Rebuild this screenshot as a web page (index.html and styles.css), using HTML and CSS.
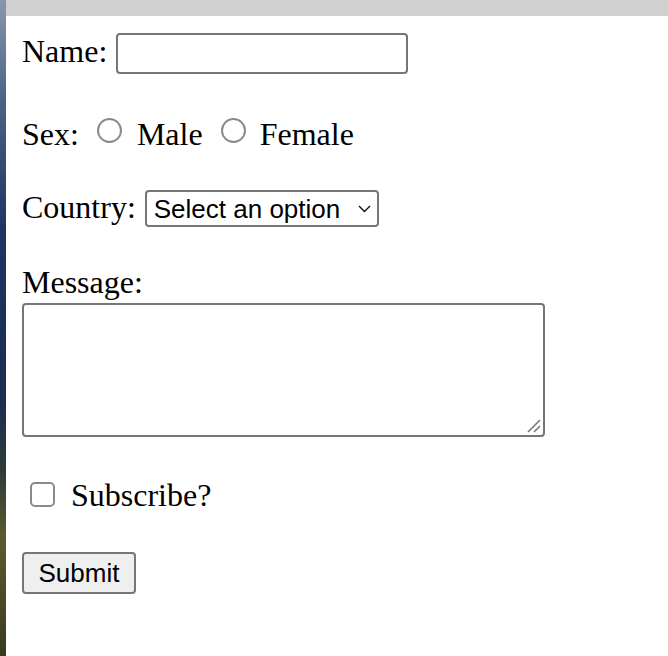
FILE: index.html
```html
<!DOCTYPE html>
<html lang="en">
<head>
    <meta charset="UTF-8">
    <meta name="viewport" content="width=device-width, initial-scale=1.0">
    <title>Form</title>
    <link rel="stylesheet" href="styles.css">
</head>
<body>
    <div class="desktop"></div>
    <div class="window">
        <div class="titlebar"></div>
        <form class="page">
            <div class="row row-name">
                <label for="name">Name:</label>
                <input type="text" id="name" class="text-input">
            </div>

            <div class="row row-sex">
                <span>Sex:</span>
                <input type="radio" id="male" name="sex" class="radio radio-first">
                <label for="male" class="radio-label">Male</label>
                <input type="radio" id="female" name="sex" class="radio">
                <label for="female" class="radio-label radio-label-last">Female</label>
            </div>

            <div class="row row-country">
                <label for="country">Country:</label>
                <div class="select-box">
                    <select id="country">
                        <option value="">Select an option</option>
                        <option value="de">Germany</option>
                        <option value="fr">France</option>
                    </select>
                    <svg class="chevron" width="13" height="8" viewBox="0 0 13 8">
                        <path d="M1 1 L6.5 6.5 L12 1" fill="none" stroke="#111" stroke-width="1.4"/>
                    </svg>
                </div>
            </div>

            <div class="row-message">
                <label for="message">Message:</label>
                <div class="message-box">
                    <textarea id="message"></textarea>
                    <svg class="grip" width="16" height="16" viewBox="0 0 16 16">
                        <path d="M2 14 L14 2 M8 14 L14 8" fill="none" stroke="#7a7a7a" stroke-width="1.6"/>
                    </svg>
                </div>
            </div>

            <div class="row row-subscribe">
                <input type="checkbox" id="subscribe" class="checkbox">
                <label for="subscribe" class="check-label">Subscribe?</label>
            </div>

            <div class="row row-submit">
                <button type="submit" class="submit">Submit</button>
            </div>
        </form>
    </div>
</body>
</html>
```

FILE: styles.css
```css
body {
    margin: 0;
    display: flex;
    height: 656px;
    overflow: hidden;
    font-family: "Liberation Serif", "Times New Roman", serif;
    font-size: 32px;
    line-height: 36px;
    color: #000;
}
.desktop {
    width: 6px;
    flex-shrink: 0;
    /* bit of desktop wallpaper showing at the edge */
    background: linear-gradient(#8797ac 0%, #4d6386 15%, #1f3461 35%, #1b2c52 60%, #2e3b3a 72%, #5b5a2c 82%, #3a3a22 100%);
}
.window {
    flex: 1;
    display: flex;
    flex-direction: column;
    background: white;
}
.titlebar {
    height: 16px;
    background: #d0d0d0;
}
.page {
    padding: 17px 0 0 16px;
}
.row {
    display: flex;
    align-items: flex-start;
}
.text-input {
    width: 292px;
    height: 41px;
    box-sizing: border-box;
    margin: 0 0 0 9px;
    border: 2px solid #767676;
    border-radius: 4px;
    font-size: 26px;
    padding: 0 6px;
}
.row-sex {
    margin-top: 42px;
}
.radio {
    appearance: none;
    width: 25px;
    height: 25px;
    box-sizing: border-box;
    margin: 2px 0 0 18px;
    border: 2px solid #8a8a8a;
    border-radius: 50%;
    background: white;
}
.radio-label {
    margin-left: 15px;
}
.radio-label-last {
    margin-left: 14px;
}
.row-country {
    margin-top: 37px;
}
.select-box {
    display: flex;
    align-items: center;
    width: 234px;
    height: 37px;
    box-sizing: border-box;
    margin: 1px 0 0 9px;
    border: 2px solid #767676;
    border-radius: 4px;
}
.select-box select {
    appearance: none;
    flex: 1;
    min-width: 0;
    border: none;
    background: transparent;
    font-family: "Liberation Sans", Arial, sans-serif;
    font-size: 26px;
    color: #000;
    padding: 0 0 0 7px;
    margin: 0;
    outline: none;
}
.chevron {
    margin-right: 6px;
    flex-shrink: 0;
}
.row-message {
    margin-top: 37px;
}
.row-message label {
    display: block;
}
.message-box {
    position: relative;
    width: 523px;
    height: 134px;
    margin-top: 3px;
}
.message-box textarea {
    display: block;
    width: 100%;
    height: 100%;
    box-sizing: border-box;
    margin: 0;
    border: 2px solid #767676;
    border-radius: 4px;
    resize: none;
    font-size: 26px;
}
.grip {
    position: absolute;
    right: 3px;
    bottom: 3px;
}
.row-subscribe {
    margin-top: 40px;
}
.checkbox {
    appearance: none;
    width: 25px;
    height: 25px;
    box-sizing: border-box;
    margin: 5px 0 0 8px;
    border: 2px solid #8a8a8a;
    border-radius: 5px;
    background: white;
}
.check-label {
    margin-left: 16px;
}
.row-submit {
    margin-top: 39px;
}
.submit {
    width: 114px;
    height: 42px;
    box-sizing: border-box;
    padding: 0;
    margin: 0;
    border: 2px solid #767676;
    border-radius: 4px;
    background: #efefef;
    font-family: "Liberation Sans", Arial, sans-serif;
    font-size: 26px;
    color: #000;
}
```
